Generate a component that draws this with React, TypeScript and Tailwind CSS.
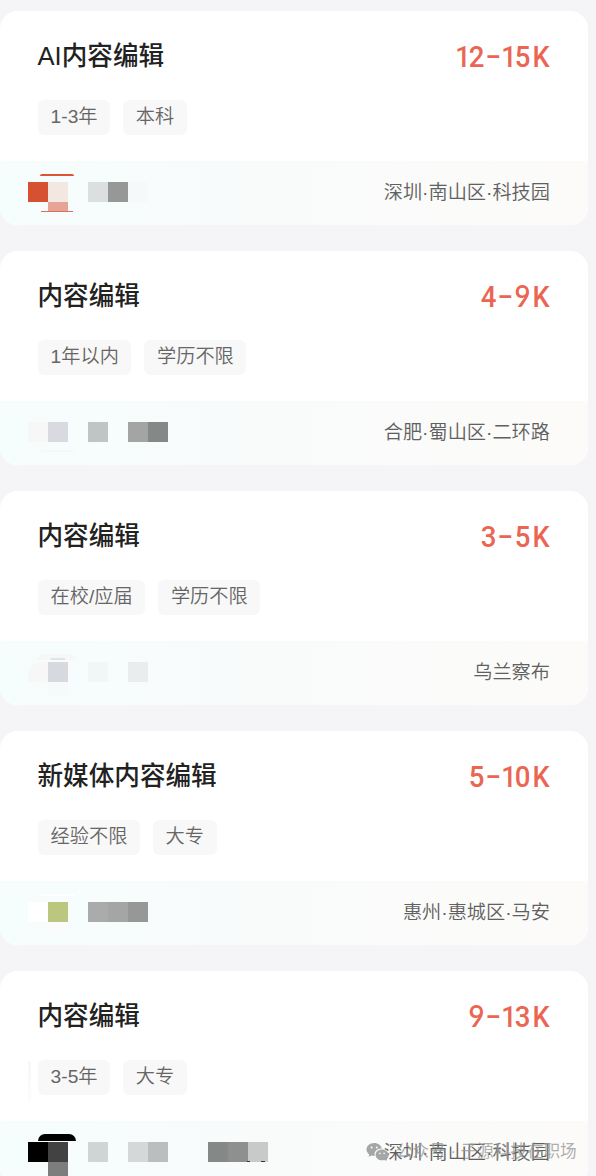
import React from "react";

type Block = { x: number; y: number; w: number; h: number; c: string; r?: string };
type Job = { title: string; salary: string; tags: string[]; place: string; blocks: Block[] };

const jobs: Job[] = [
  {
    title: "AI内容编辑", salary: "12-15K", tags: ["1-3年", "本科"], place: "深圳·南山区·科技园",
    blocks: [
      { x: 40, y: 13, w: 34, h: 2, c: "#dc5530", r: "6px 6px 0 0" },
      { x: 28, y: 21, w: 20, h: 20, c: "#d65131" },
      { x: 48, y: 21, w: 20, h: 20, c: "#f3e7e1" },
      { x: 48, y: 41, w: 20, h: 10, c: "#e5a496" },
      { x: 41, y: 50, w: 32, h: 1, c: "#d9705c" },
      { x: 88, y: 21, w: 20, h: 20, c: "#dbdfdf" },
      { x: 108, y: 21, w: 20, h: 20, c: "#969897" },
      { x: 128, y: 21, w: 20, h: 20, c: "#f6f9fa" },
    ],
  },
  {
    title: "内容编辑", salary: "4-9K", tags: ["1年以内", "学历不限"], place: "合肥·蜀山区·二环路",
    blocks: [
      { x: 28, y: 21, w: 20, h: 20, c: "#f8f7f8" },
      { x: 48, y: 21, w: 20, h: 20, c: "#d9d9e1" },
      { x: 40, y: 49, w: 34, h: 2, c: "#f6f7f7", r: "0 0 6px 6px" },
      { x: 88, y: 21, w: 20, h: 20, c: "#c0c4c4" },
      { x: 128, y: 21, w: 20, h: 20, c: "#a3a5a4" },
      { x: 148, y: 21, w: 20, h: 20, c: "#868887" },
    ],
  },
  {
    title: "内容编辑", salary: "3-5K", tags: ["在校/应届", "学历不限"], place: "乌兰察布",
    blocks: [
      { x: 38, y: 13, w: 38, h: 6, c: "#f7f7f8", r: "7px 7px 0 0" },
      { x: 50, y: 17, w: 15, h: 2, c: "#dfe4e6", r: "10px 2px 0 0" },
      { x: 28, y: 21, w: 20, h: 20, c: "#f7f7f8", r: "14px 0 0 0" },
      { x: 48, y: 21, w: 20, h: 20, c: "#d8d8df" },
      { x: 48, y: 41, w: 20, h: 15, c: "#f6fafb" },
      { x: 88, y: 21, w: 20, h: 20, c: "#f3f6f7" },
      { x: 128, y: 21, w: 20, h: 20, c: "#e9eded" },
    ],
  },
  {
    title: "新媒体内容编辑", salary: "5-10K", tags: ["经验不限", "大专"], place: "惠州·惠城区·马安",
    blocks: [
      { x: 40, y: 13, w: 34, h: 2, c: "#ffffff" },
      { x: 28, y: 21, w: 20, h: 20, c: "#ffffff" },
      { x: 48, y: 21, w: 20, h: 20, c: "#bbc77f" },
      { x: 48, y: 41, w: 20, h: 10, c: "#fafcfc" },
      { x: 88, y: 21, w: 20, h: 20, c: "#aaacab" },
      { x: 108, y: 21, w: 20, h: 20, c: "#a4a6a5" },
      { x: 128, y: 21, w: 20, h: 20, c: "#969897" },
    ],
  },
  {
    title: "内容编辑", salary: "9-13K", tags: ["3-5年", "大专"], place: "深圳·南山区·科技园",
    blocks: [
      { x: 38, y: 13, w: 38, h: 7, c: "#000000", r: "7px 7px 0 0" },
      { x: 28, y: 21, w: 20, h: 20, c: "#000000" },
      { x: 48, y: 21, w: 20, h: 20, c: "#424242" },
      { x: 48, y: 41, w: 20, h: 20, c: "#7c7e7d" },
      { x: 88, y: 21, w: 20, h: 20, c: "#d1d4d4" },
      { x: 128, y: 21, w: 20, h: 20, c: "#d5d8d8" },
      { x: 148, y: 21, w: 20, h: 20, c: "#bcbebd" },
      { x: 208, y: 21, w: 20, h: 20, c: "#868887" },
      { x: 228, y: 21, w: 20, h: 20, c: "#8e908f" },
      { x: 248, y: 21, w: 20, h: 20, c: "#c8cac9" },
      { x: 247, y: 40, w: 3, h: 1, c: "#333333" },
      { x: 261, y: 40, w: 4, h: 1, c: "#333333" },
    ],
  },
];

function glyphClass(ch: string) {
  if (ch === "-") return "w-[19px] scale-x-150 -translate-y-px";
  if (ch === "1") return "w-[12px] scale-x-90";
  if (ch === "K") return "w-[22px] scale-x-[.9]";
  if (ch === "9") return "w-[15px] scale-x-[.92] font-['Lato'] font-semibold lining-nums leading-[0px]";
  return "w-[15px] scale-x-[.92]";
}

function Salary({ value }: { value: string }) {
  return (
    <div className="-mr-px flex h-[32px] translate-y-px items-baseline font-['Roboto',sans-serif] text-[30px] leading-[32px] font-medium text-[#eb6553]">
      {value.split("").map((ch, i) => (
        <span key={i} className={"flex justify-center " + glyphClass(ch)}>{ch}</span>
      ))}
    </div>
  );
}

function JobCard({ job }: { job: Job }) {
  return (
    <article className="flex h-[214px] w-[588px] shrink-0 flex-col overflow-hidden rounded-[18px] bg-white">
      <div className="flex h-[150px] flex-col pl-[38px] pr-[37px]">
        <div className="flex h-[89px] items-center justify-between">
          <h2 className="-ml-[0.5px] text-[25.6px] leading-[36px] font-medium text-[#222]">
            {job.title.startsWith("AI") && <span className="font-normal">AI</span>}
            {job.title.replace("AI", "")}
          </h2>
          <Salary value={job.salary} />
        </div>
        <div className="flex gap-[13px]">
          {job.tags.map((t) => (
            <span key={t} className="flex h-[35px] items-center rounded-[6px] bg-[#f8f8f8] px-[12.6px] pb-[2px] text-[19.2px] leading-[28px] font-[350] text-[#666]">{t}</span>
          ))}
        </div>
      </div>
      <footer className="relative flex h-[64px] items-center justify-end bg-linear-to-r from-[#f6fdfd] via-[#f8fbfb] via-35% to-[#fcfbf9] pr-[38px]">
        {job.blocks.map((b, i) => (
          <i key={i} className="absolute" style={{ left: b.x, top: b.y, width: b.w, height: b.h, background: b.c, borderRadius: b.r }} />
        ))}
        <span className="text-[19.2px] leading-[28px] font-[350] text-[#606060]">{job.place}</span>
      </footer>
    </article>
  );
}

function Watermark() {
  return (
    <div className="absolute top-[1140px] left-[366px] flex items-center gap-[7px] whitespace-nowrap text-[#999]/80">
      <svg width="23" height="20" viewBox="0 0 23 20" fill="#a5a7a6">
        <path d="M8.3 1C3.8 1 .5 3.9.5 7.5c0 2 1.1 3.8 2.8 5L2.6 15l2.8-1.4c1 .3 2 .4 3.3.4A6 6 0 0 1 8.500 12.500C8.500 9.200 11.500 6.600 15.900 6.600 15.200 3.300 12 1 8.300 1Z" />
        <path d="M16 7.600c-3.600 0-6.400 2.300-6.400 5.300S12.400 18.200 16 18.200c.8 0 1.500-.1 2.200-.3l2.300 1.200-.6-2c1.500-1 2.500-2.500 2.500-4.200 0-3-2.800-5.300-6.400-5.300Z" />
        <g fill="#fafafa"><circle cx="5.600" cy="5.600" r="1" /><circle cx="10.800" cy="5.600" r="1" /><circle cx="13.900" cy="11.400" r=".8" /><circle cx="18.100" cy="11.400" r=".8" /></g>
      </svg>
      <span className="text-[16.600px] leading-[24px]">公众号 · 子源科技在职场</span>
    </div>
  );
}

export default function App() {
  return (
    <main className="relative h-[1176px] w-[596px] overflow-hidden bg-[#f5f5f8] pt-[11px] font-['Liberation_Sans','Noto_Sans_CJK_SC',sans-serif]">
      <div className="flex flex-col gap-[26px]">
        {jobs.map((j, i) => <JobCard key={i} job={j} />)}
      </div>
      <i className="absolute top-[1062px] left-[28px] h-[40px] w-[3px] bg-linear-to-b from-[#f7f7f7] to-[#fcfcfc]" />
      <Watermark />
    </main>
  );
}
